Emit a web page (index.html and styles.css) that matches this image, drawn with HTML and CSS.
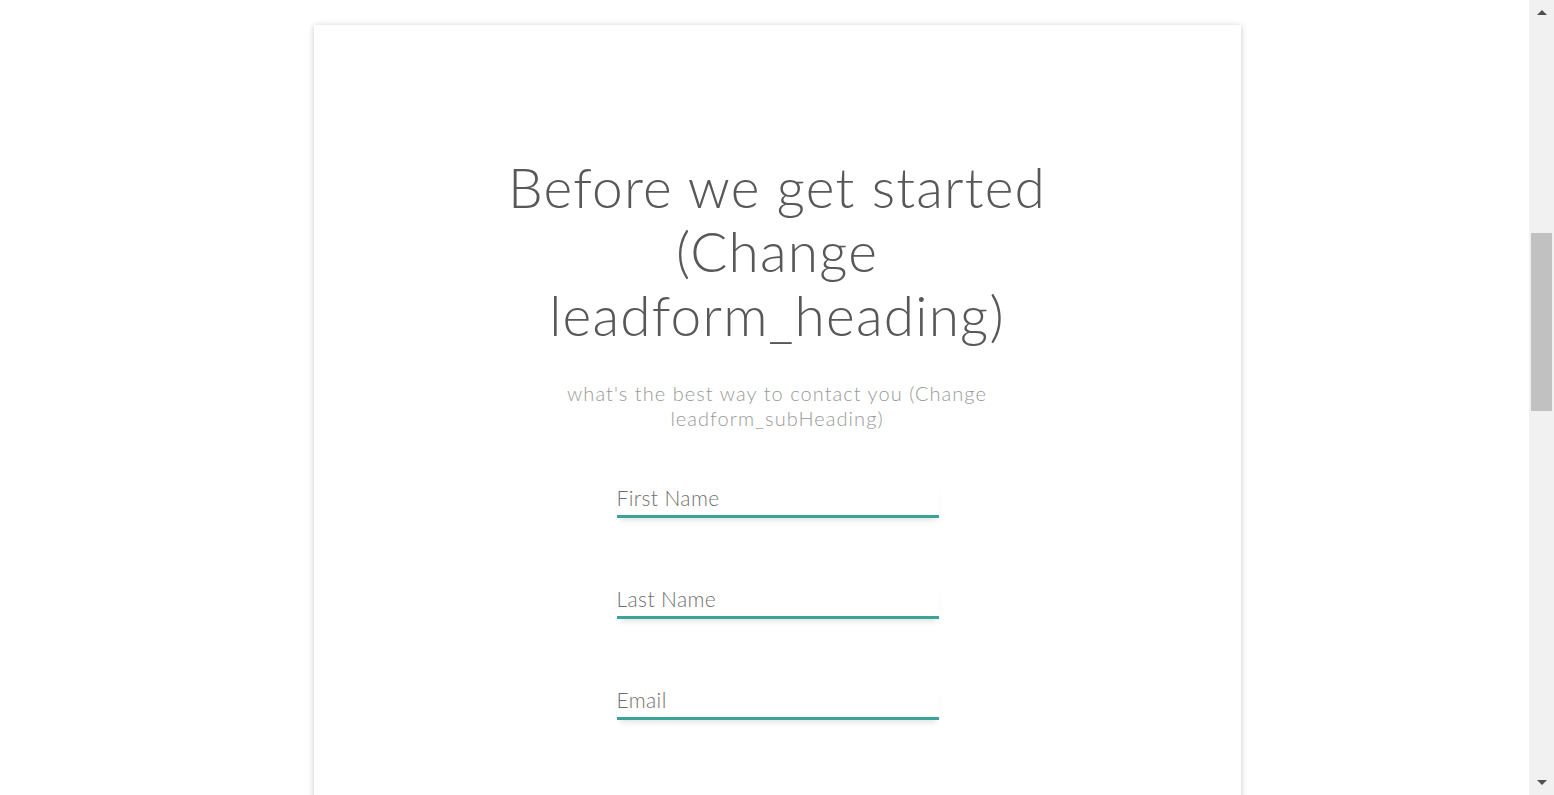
FILE: index.html
```html
<!DOCTYPE html>
<html lang="en">
<head>
<meta charset="utf-8">
<title>Lead form</title>
<link rel="stylesheet" href="styles.css">
</head>
<body>
<div class="page">
  <main class="card">
    <header class="intro">
      <h1 class="heading">Before we get started (Change leadform_heading)</h1>
      <p class="subheading">what's the best way to contact you (Change leadform_subHeading)</p>
    </header>
    <form class="fields">
      <label class="field"><input class="field-input" type="text" placeholder="First Name"></label>
      <label class="field"><input class="field-input" type="text" placeholder="Last Name"></label>
      <label class="field"><input class="field-input" type="email" placeholder="Email"></label>
    </form>
  </main>
</div>
<div class="scrollbar" aria-hidden="true">
  <div class="sb-arrow sb-up"></div>
  <div class="sb-track"><div class="sb-thumb"></div></div>
  <div class="sb-arrow sb-down"></div>
</div>
</body>
</html>
```

FILE: styles.css
```css
html, body {
  margin: 0;
  padding: 0;
  height: 100%;
  overflow: hidden;
  background: #fff;
}

.page {
  padding-top: 25px;
}

.card {
  width: 927px;
  min-height: 900px;
  margin: 0 auto;
  background: #fff;
  box-shadow: 0 1px 6px rgba(0, 0, 0, 0.22);
  display: flex;
  flex-direction: column;
  align-items: center;
}

.intro {
  display: flex;
  flex-direction: column;
  align-items: center;
  padding-top: 130px;
}

.heading {
  margin: 0;
  width: 600px;
  font-family: "Lato", "Open Sans", sans-serif;
  font-weight: 300;
  font-size: 55px;
  line-height: 64px;
  letter-spacing: 1.2px;
  color: #585858;
  text-align: center;
}

.subheading {
  margin: 34px 0 0;
  width: 470px;
  font-family: "Lato", "Open Sans", sans-serif;
  font-weight: 300;
  font-size: 20px;
  line-height: 25px;
  letter-spacing: 1.05px;
  color: #999;
  text-align: center;
}

.fields {
  display: flex;
  flex-direction: column;
  gap: 67px;
  margin-top: 53px;
  padding-left: 1px;
}

.field {
  display: block;
  width: 322px;
}

.field-input {
  display: block;
  width: 100%;
  box-sizing: border-box;
  border: 0;
  border-bottom: 3px solid #38a596;
  box-shadow: 0 5px 6px -3px rgba(0, 0, 0, 0.13);
  padding: 0 0 5px;
  height: 34px;
  font-family: "Lato", sans-serif;
  font-weight: 300;
  font-size: 21px;
  letter-spacing: 0.4px;
  color: #666;
  background: transparent;
  outline: none;
}

.field-input::placeholder {
  color: #707070;
  opacity: 1;
}

.scrollbar {
  position: fixed;
  top: 0;
  right: 0;
  width: 25px;
  height: 100%;
  background: #f1f1f1;
  display: flex;
  flex-direction: column;
}

.sb-arrow {
  height: 25px;
  display: flex;
  align-items: center;
  justify-content: center;
}

.sb-up::before {
  content: "";
  border-left: 5px solid transparent;
  border-right: 5px solid transparent;
  border-bottom: 5px solid #505050;
}

.sb-down::before {
  content: "";
  border-left: 5px solid transparent;
  border-right: 5px solid transparent;
  border-top: 5px solid #505050;
}

.sb-track {
  flex: 1;
  padding-top: 208px;
}

.sb-thumb {
  margin: 0 2px;
  height: 178px;
  background: #c1c1c1;
}
```
